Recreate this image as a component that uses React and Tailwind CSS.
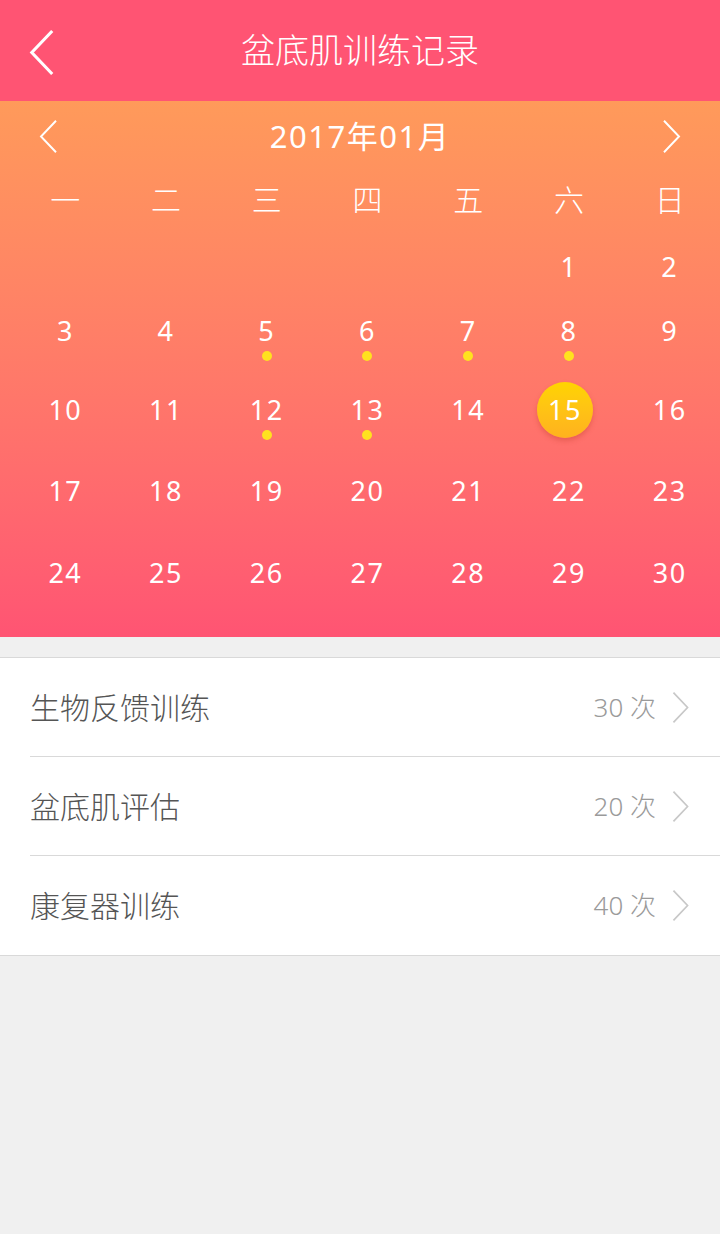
import React from "react";

const font = { fontFamily: '"Noto Sans", "Noto Sans CJK SC", sans-serif' };

const weekdays = ["一", "二", "三", "四", "五", "六", "日"];

// each row: [cells, row height]
const rows = [
  [[null, null, null, null, null, 1, 2], "h-[64px]"],
  [[3, 4, 5, 6, 7, 8, 9], "h-[79px]"],
  [[10, 11, 12, 13, 14, 15, 16], "h-[81px]"],
  [[17, 18, 19, 20, 21, 22, 23], "h-[82px]"],
  [[24, 25, 26, 27, 28, 29, 30], "h-[84px]"],
];

const marked = [5, 6, 7, 8, 12, 13];
const today = 15;

const records = [
  { name: "生物反馈训练", count: 30 },
  { name: "盆底肌评估", count: 20 },
  { name: "康复器训练", count: 40 },
];

function Chevron({ dir = "left", className, stroke = "#fff", width = 3 }) {
  return (
    <svg viewBox="0 0 24 44" className={className} fill="none">
      <polyline
        points={dir === "left" ? "22,1 2,22 22,43" : "2,1 22,22 2,43"}
        stroke={stroke}
        strokeWidth={width}
        strokeLinejoin="miter"
      />
    </svg>
  );
}

function DayCell({ day }) {
  if (!day) return <div />;
  const isToday = day === today;
  return (
    <div className="flex flex-col items-center">
      <div className="h-10 flex items-center justify-center">
        {isToday ? (
          <span className="w-14 h-14 shrink-0 -ml-[8px] rounded-full bg-gradient-to-b from-[#FFD400] to-[#FFB11E] shadow-[0_3px_5px_rgba(190,60,40,0.35)] flex items-center justify-center text-white text-[27px] font-normal tracking-[1.5px]">
            {day}
          </span>
        ) : (
          <span className="text-white text-[27px] font-normal tracking-[1.5px] leading-10">{day}</span>
        )}
      </div>
      {marked.includes(day) && <span className="w-[10px] h-[10px] rounded-full bg-[#FFE21F]" />}
    </div>
  );
}

export default function App() {
  return (
    <div className="w-[720px] min-h-[1234px] bg-[#F0F0F0] font-light" style={font}>
      {/* header */}
      <div className="relative h-[101px] bg-[#FF5473] flex items-center justify-center">
        <button className="absolute left-[29px] top-[30px]" aria-label="返回">
          <Chevron className="w-[26px] h-[45px]" width={3} />
        </button>
        <h1 className="text-white text-[34px] font-light">盆底肌训练记录</h1>
      </div>

      {/* calendar */}
      <div className="h-[536px] bg-gradient-to-b from-[#FF9A5A] to-[#FF5473]">
        <div className="h-[70px] flex items-center justify-between px-[39px]">
          <Chevron className="w-[19px] h-[33px]" width={2.6} />
          <span className="text-white text-[31px] font-normal tracking-[1.5px]">2017年01月</span>
          <Chevron dir="right" className="w-[19px] h-[33px]" width={2.6} />
        </div>
        <div className="grid grid-cols-7 pl-[15px] h-[56px] items-center">
          {weekdays.map(w => (
            <div key={w} className="text-center text-white text-[30px]">{w}</div>
          ))}
        </div>
        <div className="pl-[15px] pt-[20px]">
          {rows.map(([cells, h], i) => (
            <div key={i} className={`grid grid-cols-7 ${h}`}>
              {cells.map((d, j) => <DayCell key={j} day={d} />)}
            </div>
          ))}
        </div>
      </div>

      {/* records */}
      <div className="mt-[20px] bg-white border-y border-[#D9D9D9]">
        {records.map((r, i) => (
          <div key={r.name} className="pl-[30px]">
            <div className={`h-[99px] flex items-center pr-[30px] ${i < records.length - 1 ? "border-b border-[#D9D9D9]" : ""}`}>
              <span className="flex-1 text-[30px] text-[#555555]">{r.name}</span>
              <span className="text-[26px] text-[#9A9A9A]">{r.count} 次</span>
              <Chevron dir="right" stroke="#C8C8C8" width={2.4} className="ml-[15px] w-[19px] h-[31px]" />
            </div>
          </div>
        ))}
      </div>
    </div>
  );
}
